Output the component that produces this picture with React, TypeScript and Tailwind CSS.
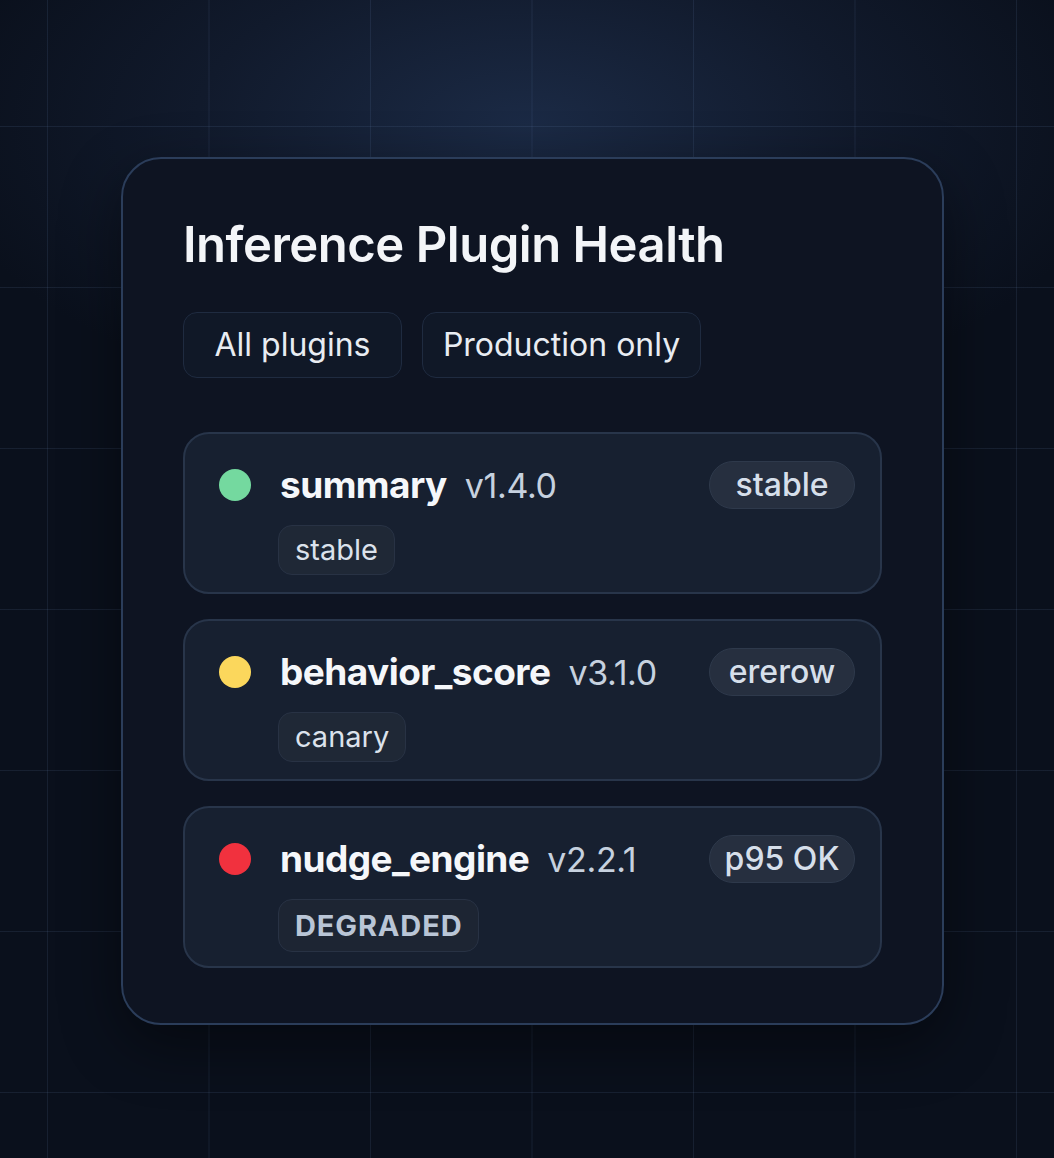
const plugins = [
  { name: "summary", version: "v1.4.0", dot: "bg-[#74d99f]", badge: "stable", tag: "stable", degraded: false },
  { name: "behavior_score", version: "v3.1.0", dot: "bg-[#fbd75c]", badge: "ererow", tag: "canary", degraded: false },
  { name: "nudge_engine", version: "v2.2.1", dot: "bg-[#f1313e]", badge: "p95 OK", tag: "DEGRADED", degraded: true },
];

export default function App() {
  return (
    <div className="relative min-h-[1158px] w-full overflow-hidden bg-[#0a101c] font-['Inter','Noto_Sans',sans-serif]">
      {/* background glow + grid */}
      <div className="pointer-events-none absolute inset-0 bg-[radial-gradient(ellipse_600px_300px_at_50%_125px,#1b2a45_0%,#111a2c_55%,transparent_100%)]" />
      <div className="pointer-events-none absolute inset-0 bg-[linear-gradient(to_right,rgba(110,140,190,0.13)_1px,transparent_1px),linear-gradient(to_bottom,rgba(110,140,190,0.13)_1px,transparent_1px)] bg-[size:161.5px_161px] bg-[position:47px_126px]" />

      <div className="relative flex pl-[121px] pt-[157px]">
        {/* Card */}
        <div className="flex h-[868px] w-[823px] flex-col rounded-[40px] border-2 border-[#2b3d5a] bg-[#0e1422] px-[60px] pt-[56px] shadow-[0_20px_60px_rgba(0,0,0,0.45)]">
          <h1 className="text-[49px] font-semibold leading-[60px] tracking-[-0.01em] text-[#f3f5f8]">
            Inference Plugin Health
          </h1>

          <div className="mt-[37px] flex gap-5">
            <button className="h-[66px] w-[219px] rounded-[14px] border-[1.5px] border-[#1f2b40] bg-[#101827] text-[32px] text-[#e8ecf2]">
              All plugins
            </button>
            <button className="h-[66px] w-[279px] rounded-[14px] border-[1.5px] border-[#1f2b40] bg-[#101827] text-[32px] text-[#e8ecf2]">
              Production only
            </button>
          </div>

          <div className="mt-[54px] flex flex-col gap-[25px]">
            {plugins.map((p) => (
              <div
                key={p.name}
                className="flex h-[162px] flex-col rounded-[26px] border-2 border-[#28354a] bg-[#172030] pl-[34px] pr-[25px] pt-[27px]"
              >
                <div className="flex h-[48px] items-center">
                  <span className={`h-8 w-8 shrink-0 rounded-full ${p.dot}`} />
                  <span className="ml-[29px] text-[37px] font-bold tracking-[-0.015em] text-[#f5f7fa]">{p.name}</span>
                  <span className="ml-[18px] text-[34px] tracking-[-0.01em] text-[#c6d1df]">{p.version}</span>
                  <span className="ml-auto flex h-[48px] w-[146px] items-center justify-center rounded-full border border-[#2e394b] bg-[#262f3f] text-[32px] font-medium text-[#d6dfea]">
                    {p.badge}
                  </span>
                </div>
                <div className="mt-4 pl-[59px]">
                  {p.degraded ? (
                    <span className="inline-flex h-[53px] items-center rounded-[14px] border border-[#283244] bg-[#1d2533] px-4 text-[29px] font-bold tracking-[0.03em] text-[#b9c5d6]">
                      {p.tag}
                    </span>
                  ) : (
                    <span className="inline-flex h-[50px] items-center rounded-[14px] border border-[#283244] bg-[#1f2836] px-4 text-[29px] text-[#dbe2ec]">
                      {p.tag}
                    </span>
                  )}
                </div>
              </div>
            ))}
          </div>
        </div>
      </div>
    </div>
  );
}
